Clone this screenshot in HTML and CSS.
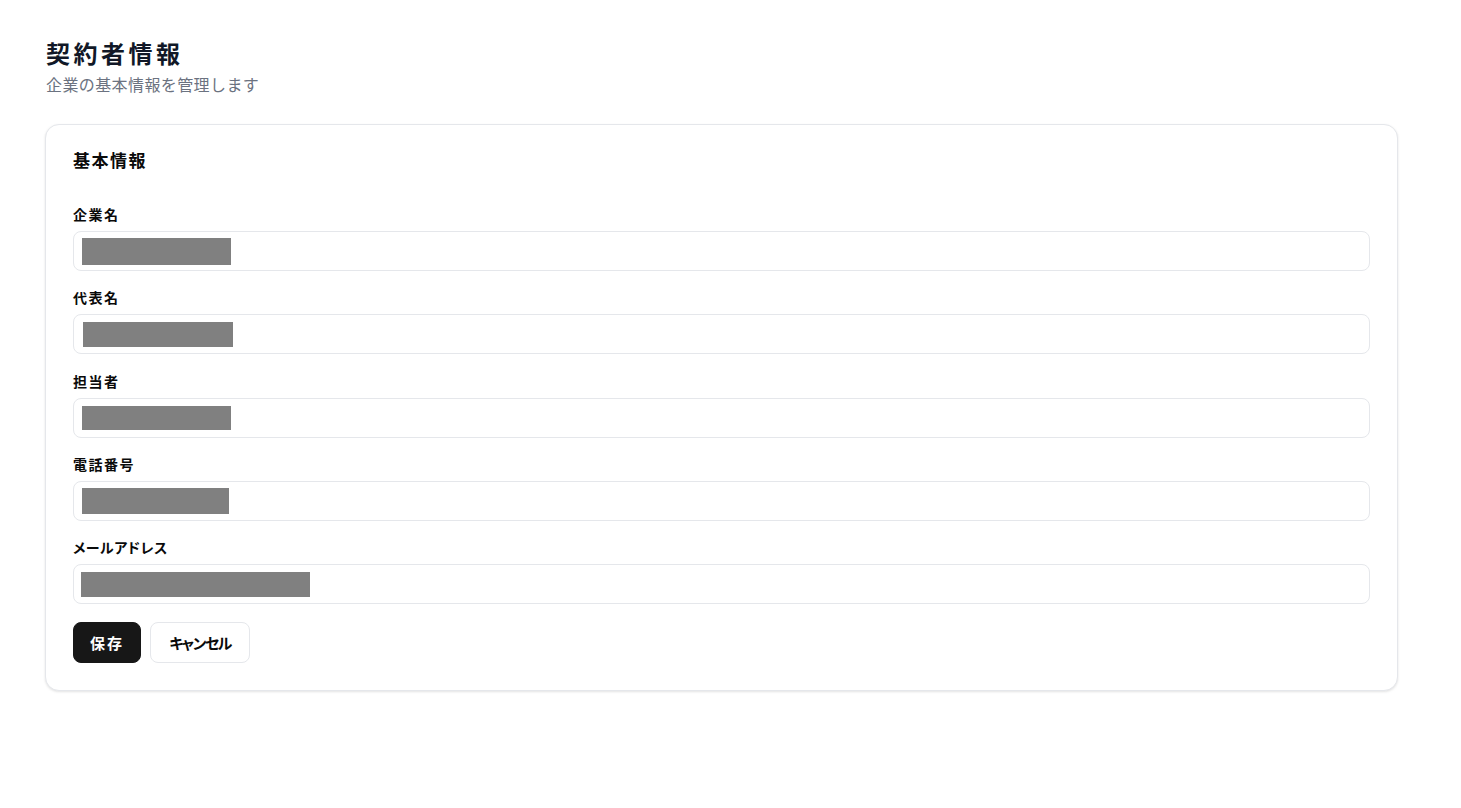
FILE: index.html
```html
<!DOCTYPE html>
<html lang="ja">
<head>
<meta charset="utf-8">
<title>契約者情報</title>
<link rel="stylesheet" href="styles.css">
</head>
<body>
<main class="page">
  <header class="page-header">
    <h1 class="page-title">契約者情報</h1>
    <p class="page-subtitle">企業の基本情報を管理します</p>
  </header>
  <section class="card">
    <h2 class="card-title">基本情報</h2>
    <form class="form">
      <div class="field">
        <label class="label">企業名</label>
        <div class="input"><span class="redact redact-1"></span></div>
      </div>
      <div class="field">
        <label class="label">代表名</label>
        <div class="input"><span class="redact redact-2"></span></div>
      </div>
      <div class="field">
        <label class="label">担当者</label>
        <div class="input"><span class="redact redact-3"></span></div>
      </div>
      <div class="field">
        <label class="label">電話番号</label>
        <div class="input"><span class="redact redact-4"></span></div>
      </div>
      <div class="field">
        <label class="label label-kana">メールアドレス</label>
        <div class="input"><span class="redact redact-5"></span></div>
      </div>
      <div class="actions">
        <button type="button" class="btn btn-primary">保存</button>
        <button type="button" class="btn btn-outline">キャンセル</button>
      </div>
    </form>
  </section>
</main>
</body>
</html>
```

FILE: styles.css
```css
* { box-sizing: border-box; }
html, body { margin: 0; padding: 0; background: #ffffff; }
body {
  font-family: "Noto Sans CJK JP", "Noto Sans", sans-serif;
  color: #0a0a0a;
}
.page {
  padding: 36px 63px 40px 45px;
}
.page-header { margin-bottom: 28px; padding-left: 1px; }
.page-title {
  margin: 0;
  font-size: 24px;
  line-height: 34px;
  font-weight: 700;
  color: #111827;
  letter-spacing: 3.5px;
}
.page-subtitle {
  margin: 2px 0 0 0;
  font-size: 16px;
  line-height: 24px;
  color: #6b7280;
  letter-spacing: 0.4px;
}
.card {
  width: 1353px;
  border: 1px solid #e5e7eb;
  border-radius: 14px;
  box-shadow: 0 1px 3px rgba(0,0,0,0.08), 0 1px 2px rgba(0,0,0,0.04);
  padding: 23px 27px 27px 27px;
  background: #fff;
}
.card-title {
  margin: 0 0 32px 0;
  font-size: 17px;
  line-height: 24px;
  font-weight: 700;
  letter-spacing: 1.5px;
}
.form { display: flex; flex-direction: column; gap: 16.25px; }
.field { display: flex; flex-direction: column; gap: 7px; }
.label {
  font-size: 14px;
  line-height: 20px;
  font-weight: 700;
  letter-spacing: 1.5px;
}
.label-kana {
  font-feature-settings: "palt" 1;
  letter-spacing: 0.5px;
}
.input {
  height: 40px;
  border: 1px solid #e5e7eb;
  border-radius: 8px;
  display: flex;
  align-items: center;
  padding-left: 8px;
  background: #fff;
}
.redact { display: block; height: 27px; background: #808080; }
.redact-1 { width: 149px; }
.redact-2 { width: 150px; height: 25px; margin-left: 1px; }
.redact-3 { width: 149px; height: 24px; }
.redact-4 { width: 147px; height: 26px; }
.redact-5 { width: 229px; height: 25px; margin-left: -1px; }
.actions { display: flex; gap: 9px; margin-top: 2px; }
.btn {
  height: 41px;
  border-radius: 8px;
  font-family: inherit;
  font-size: 15px;
  font-weight: 700;
  cursor: pointer;
  font-feature-settings: "palt" 1;
}
.btn-primary {
  width: 68px;
  background: #171717;
  color: #fff;
  border: 1px solid #171717;
  letter-spacing: 2px;
}
.btn-outline {
  width: 100px;
  background: #fff;
  color: #0a0a0a;
  border: 1px solid #e5e7eb;
  letter-spacing: -1.5px;
}
```
